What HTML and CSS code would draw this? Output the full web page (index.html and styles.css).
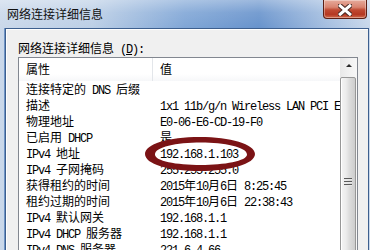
FILE: index.html
```html
<!DOCTYPE html>
<html lang="zh-CN">
<head>
  <meta charset="UTF-8" />
  <title>网络连接详细信息</title>
  <link rel="stylesheet" href="styles.css">
</head>
<body>
  <div class="window">
    <div class="titlebar">
      <div class="title">网络连接详细信息</div>
      <div class="close">
        <svg width="14" height="12" viewBox="0 0 14 12">
          <path d="M2.2 1.8 L11.8 10.2 M11.8 1.8 L2.2 10.2" stroke="#4a2a24" stroke-width="5" stroke-linecap="square"/>
          <path d="M2.2 1.8 L11.8 10.2 M11.8 1.8 L2.2 10.2" stroke="#ffffff" stroke-width="3" stroke-linecap="square"/>
        </svg>
      </div>
    </div>

    <div class="panel">
      <div class="label">网络连接详细信息<span class="m"> (<u>D</u>):</span></div>
      <div class="listbox">
        <div class="list">
          <div class="head">
            <div class="cell">属性</div>
            <div class="cell">值</div>
          </div>
          <div class="row"><div class="cell">连接特定的<span class="m"> DNS </span>后缀</div><div class="cell"></div></div>
          <div class="row"><div class="cell">描述</div><div class="cell"><span class="m">1x1 11b/g/n Wireless LAN PCI Express Half Mini Card Adapter</span></div></div>
          <div class="row"><div class="cell">物理地址</div><div class="cell"><span class="m">E0-06-E6-CD-19-F0</span></div></div>
          <div class="row"><div class="cell">已启用<span class="m"> DHCP</span></div><div class="cell">是</div></div>
          <div class="row"><div class="cell"><span class="m">IPv4 </span>地址</div><div class="cell"><span class="m">192.168.1.103</span></div></div>
          <div class="row"><div class="cell"><span class="m">IPv4 </span>子网掩码</div><div class="cell"><span class="m">255.255.255.0</span></div></div>
          <div class="row"><div class="cell">获得租约的时间</div><div class="cell"><span class="m">2015</span>年<span class="m">10</span>月<span class="m">6</span>日<span class="m"> 8:25:45</span></div></div>
          <div class="row"><div class="cell">租约过期的时间</div><div class="cell"><span class="m">2015</span>年<span class="m">10</span>月<span class="m">6</span>日<span class="m"> 22:38:43</span></div></div>
          <div class="row"><div class="cell"><span class="m">IPv4 </span>默认网关</div><div class="cell"><span class="m">192.168.1.1</span></div></div>
          <div class="row"><div class="cell"><span class="m">IPv4 DHCP </span>服务器</div><div class="cell"><span class="m">192.168.1.1</span></div></div>
          <div class="row"><div class="cell"><span class="m">IPv4 DNS </span>服务器</div><div class="cell"><span class="m">221.6.4.66</span></div></div>
        </div>
        <div class="scrollbar">
          <div class="sb-up"><span class="arrow"></span></div>
          <div class="sb-thumb">
            <div class="grip"></div>
          </div>
        </div>
      </div>
    </div>
  </div>

  <!-- cerchio rosso sopra l'indirizzo IPv4 -->
  <svg class="mark" width="120" height="40" viewBox="0 0 120 40">
    <path fill="#7b1315" fill-rule="evenodd"
      d="M60 3 C90 3 115 10 115 20 C115 30 90 37 60 37 C28 37 5 30 5 20 C5 10 28 3 60 3 Z
         M61 8.5 C84 8.5 107 13 107 20.5 C107 27 84 31 61 31 C36 31 15 27 15 20.5 C15 13 36 8.5 61 8.5 Z"/>
  </svg>
</body>
</html>
```

FILE: styles.css
```css
html, body {
  margin: 0;
  height: 250px;
  overflow: hidden;
}
body {
  width: 370px;
  position: relative;
  font-family: "Noto Sans CJK SC", sans-serif;
  font-size: 12px;
  color: #000;
  background: #b9cce4;
}
.m {
  font-family: "Liberation Mono", monospace;
  font-size: 12px;
  line-height: 12px;
  letter-spacing: -1.2px;
}
.window {
  display: flex;
  flex-direction: column;
  height: 300px;
  padding: 0 1px 0 5px;
  background: linear-gradient(90deg, #cad8ea 0%, #bccfe6 25%, #80a6d6 50%, #6893cc 70%, #a4bee0 88%, #c9d8eb 100%);
}
.titlebar {
  display: flex;
  justify-content: space-between;
  align-items: flex-start;
  height: 28px;
  margin-left: -5px;
  margin-right: -1px;
  background: linear-gradient(180deg, rgba(255,255,255,0.35) 0%, rgba(255,255,255,0.1) 45%, rgba(255,255,255,0) 100%);
}
.title {
  padding: 5px 0 0 7px;
  line-height: 17px;
  color: #111;
}
.close {
  width: 44px;
  height: 19px;
  margin-right: 3px;
  box-sizing: border-box;
  border: 1px solid #5b1f15;
  border-top: none;
  border-radius: 0 0 4px 4px;
  background: linear-gradient(180deg, #e6ab9c 0%, #d98470 40%, #c04a33 55%, #b53822 80%, #cf6a4c 100%);
  box-shadow: inset 0 0 0 1px rgba(255,255,255,0.35);
  display: flex;
  align-items: center;
  justify-content: center;
}
.close svg { display: block; margin-top: 1px; }
.panel {
  flex: 1;
  display: flex;
  flex-direction: column;
  background: #f0f0f0;
  border: 1px solid #3d5f8e;
  box-shadow: inset 1px 1px 0 #fff, -1px 0 0 #6f94c6;
  padding: 11px 10px 0 12px;
}
.label {
  line-height: 16px;
  height: 16px;
  margin-bottom: 1px;
}
.listbox {
  flex: 1;
  display: flex;
  border: 1px solid #828790;
  background: #fff;
  min-height: 0;
}
.list {
  flex: 1;
  overflow: hidden;
  min-width: 0;
}
.head {
  display: grid;
  grid-template-columns: 134px 1fr;
  height: 23px;
  background: linear-gradient(180deg, #fff 0%, #fff 70%, #f6f7f9 100%);
}
.head .cell {
  line-height: 22px;
  padding-left: 7px;
}
.head .cell:first-child {
  border-right: 1px solid #e3e6ea;
}
.row {
  display: grid;
  grid-template-columns: 134px 1fr;
  height: 16px;
  line-height: 16px;
}
.cell {
  padding-left: 7px;
  white-space: nowrap;
  overflow: hidden;
}
.scrollbar {
  width: 17px;
  display: flex;
  flex-direction: column;
  background: linear-gradient(90deg, #e8e8e8 0%, #f2f2f2 60%, #f7f7f7 100%);
}
.sb-up {
  height: 19px;
  display: flex;
  justify-content: center;
  padding-top: 6px;
  box-sizing: border-box;
}
.arrow {
  width: 0;
  height: 0;
  border-left: 3px solid transparent;
  border-right: 3px solid transparent;
  border-bottom: 3px solid #2a2a2a;
}
.sb-thumb {
  flex: 1;
  width: 16px;
  box-sizing: border-box;
  border: 1px solid #979797;
  border-radius: 2px;
  background: linear-gradient(90deg, #f4f4f4 0%, #ececec 35%, #dcdcdc 60%, #cdcdcd 100%);
  box-shadow: inset 1px 0 0 #fff;
  position: relative;
}
.grip {
  position: absolute;
  left: 3px;
  top: 100px;
  width: 8px;
  height: 9px;
  background: repeating-linear-gradient(180deg, #5a5a5a 0 1px, #e8e8e8 1px 2px, transparent 2px 3px);
}
.mark {
  position: absolute;
  left: 140px;
  top: 134px;
}
```
